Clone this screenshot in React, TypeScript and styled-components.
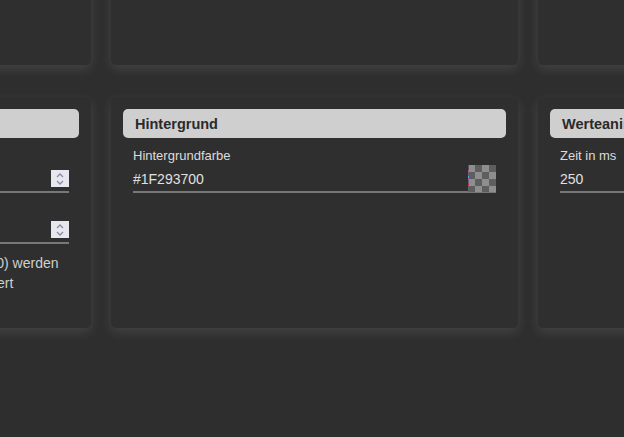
import React from "react";
import styled, { createGlobalStyle } from "styled-components";

const Global = createGlobalStyle`
  html, body { margin: 0; padding: 0; background: #2e2e2e; overflow: hidden; }
  body { font-family: "Liberation Sans", Arial, sans-serif; width: 624px; height: 437px; }
`;

const Page = styled.div`
  width: 624px;
  height: 437px;
  overflow: hidden;
  background: #2e2e2e;
`;

const Grid = styled.div`
  display: grid;
  grid-template-columns: repeat(3, 407px);
  grid-auto-rows: 231px;
  column-gap: 20px;
  row-gap: 32px;
  margin-left: -316px;
  margin-top: -166px;
`;

const Card = styled.section`
  background: #2f2f2f;
  border-radius: 5px;
  box-shadow: 0 4px 12px rgba(255, 255, 255, 0.11);
  padding: 12px;
  box-sizing: border-box;
  display: flex;
  flex-direction: column;
  gap: 9px;
`;

const Header = styled.h2`
  margin: 0;
  height: 29px;
  background: #cfcfcf;
  border-radius: 5px;
  display: flex;
  align-items: center;
  padding: 0 12px;
  font-size: 14.5px;
  font-weight: bold;
  color: #2a2a2a;
  white-space: nowrap;
  overflow: hidden;
`;

const Body = styled.div`
  display: flex;
  flex-direction: column;
  gap: 5px;
  padding: 0 10px;
`;

const Field = styled.div`
  display: flex;
  flex-direction: column;
  gap: 1px;
`;

const Label = styled.label`
  font-size: 13px;
  line-height: 16px;
  padding-top: 1px;
  color: #dcdcdc;
`;

const InputRow = styled.div`
  height: 26px;
  border-bottom: 2px solid #787878;
  display: flex;
  align-items: center;
  justify-content: space-between;
`;

const Value = styled.span`
  font-size: 14px;
  color: #e0e0e0;
  padding-top: 2px;
`;

const Swatch = styled.div`
  width: 28px;
  height: 27px;
  align-self: flex-end;
  margin-bottom: -1px;
  background-image:
    linear-gradient(
      to bottom,
      #555 0 5px,
      #c040d0 5px 7px,
      #666 7px 11px,
      #3cc0c0 11px 13px,
      #c040d0 13px 15px,
      #666 15px 19px,
      #d02060 19px 20px,
      #666 20px
    ),
    conic-gradient(#5e5e5e 25%, #8e8e8e 0 50%, #5e5e5e 0 75%, #8e8e8e 0);
  background-size: 1px 100%, 14px 14px;
  background-repeat: no-repeat, repeat;
`;

const Spin = styled.div`
  width: 18px;
  height: 17px;
  background: #e7e7ef;
  display: flex;
  align-items: center;
  justify-content: center;
  margin-top: 1px;
`;

const Help = styled.p`
  margin: 4px 0 0;
  font-size: 14px;
  line-height: 20px;
  color: #cfcfcf;
  white-space: nowrap;
`;

const SpinIcon = () => (
  <svg width="10" height="14" viewBox="0 0 10 14" fill="none" stroke="#8a8aa2" strokeWidth="1.3">
    <path d="M2 5 L5 2 L8 5" />
    <path d="M2 9 L5 12 L8 9" />
  </svg>
);

export default function App() {
  return (
    <Page>
      <Global />
      <Grid>
        <Card />
        <Card />
        <Card />
        <Card>
          <Header>Zahlenformat</Header>
          <Body>
            <Field>
              <Label>Minimalwert</Label>
              <InputRow>
                <Value>0</Value>
                <Spin><SpinIcon /></Spin>
              </InputRow>
            </Field>
            <Field>
              <Label>Nachkommastellen</Label>
              <InputRow>
                <Value>2</Value>
                <Spin><SpinIcon /></Spin>
              </InputRow>
            </Field>
            <Help>
              Zahlen mit der Nachkommastellenanzahl Null (0) werden
              <br />
              als ganze Zahlen ohne Dezimalzeichen formatiert
            </Help>
          </Body>
        </Card>
        <Card>
          <Header>Hintergrund</Header>
          <Body>
            <Field>
              <Label>Hintergrundfarbe</Label>
              <InputRow>
                <Value>#1F293700</Value>
                <Swatch />
              </InputRow>
            </Field>
          </Body>
        </Card>
        <Card>
          <Header>Werteanimation</Header>
          <Body>
            <Field>
              <Label>Zeit in ms</Label>
              <InputRow>
                <Value>250</Value>
              </InputRow>
            </Field>
          </Body>
        </Card>
      </Grid>
    </Page>
  );
}
